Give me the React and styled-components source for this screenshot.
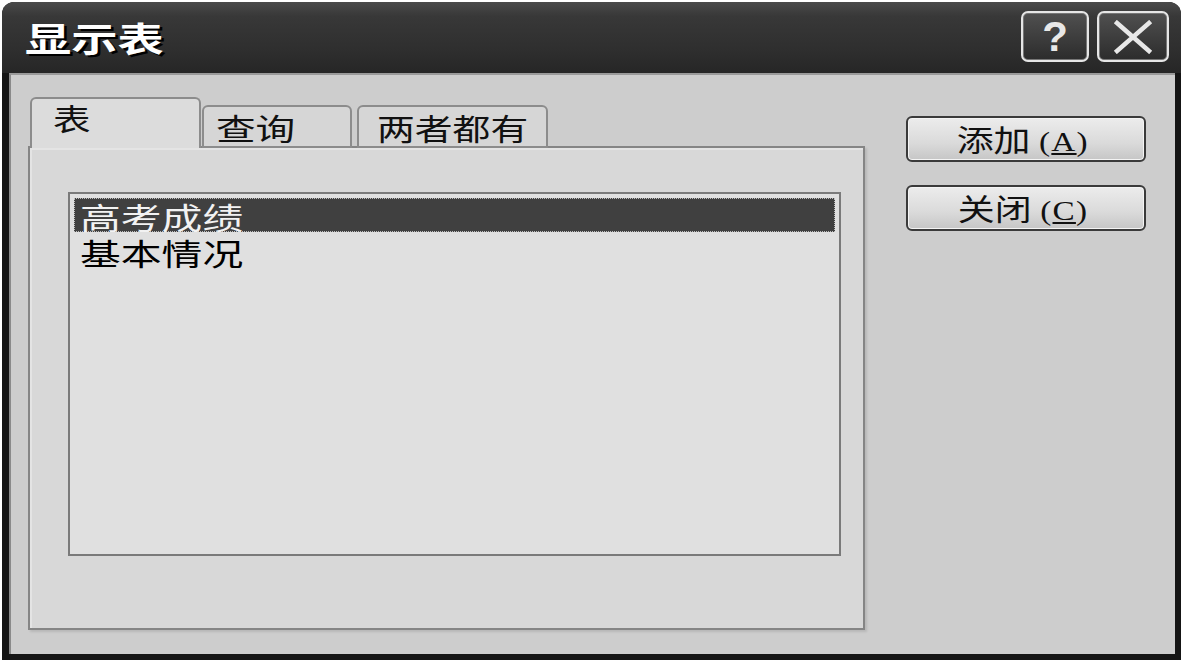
import React from "react";
import styled, { createGlobalStyle } from "styled-components";

const Global = createGlobalStyle`
  html, body { margin: 0; padding: 0; background: #ffffff; overflow: hidden; }
  body { font-family: "Noto Sans CJK SC", "Liberation Sans", sans-serif; }
`;

const Window = styled.div`
  margin: 2px 0 0 2px;
  width: 1179px;
  height: 658px;
  display: flex;
  flex-direction: column;
  background: #151515;
  border-radius: 12px 12px 0 0;
  overflow: hidden;
  box-sizing: border-box;
  padding: 0 6px 6px 7px;
`;

const TitleBar = styled.div`
  height: 71px;
  flex: none;
  display: flex;
  align-items: center;
  justify-content: space-between;
  padding: 0 12px 0 23px;
  margin: 0 -6px 0 -7px;
  background: linear-gradient(#4a4a4a 0%, #383838 20%, #2e2e2e 70%, #262626 100%);
`;

const Stretch = styled.span`
  display: inline-block;
  white-space: nowrap;
  transform: scaleX(${(p) => p.$sx});
  transform-origin: ${(p) => (p.$center ? "center" : "left")} center;
`;

const Title = styled.div`
  color: #ffffff;
  font-size: 34px;
  font-weight: 700;
  line-height: 1;
  text-shadow: 2px 2px 0 #000;
`;

const TitleButtons = styled.div`
  display: flex;
  gap: 8px;
  margin-top: -2px;
`;

const TitleButton = styled.div`
  width: ${(p) => p.$w}px;
  height: 51px;
  box-sizing: border-box;
  border: 2px solid #e6e6e6;
  border-radius: 7px;
  background: linear-gradient(#505050, #2c2c2c);
  display: flex;
  align-items: center;
  justify-content: center;
  color: #e8e8e8;
  font-family: "Liberation Sans", sans-serif;
  font-weight: 700;
  font-size: 42px;
  line-height: 1;
  box-shadow: inset 0 0 0 1px #777;
`;

const Body = styled.div`
  flex: 1;
  display: flex;
  gap: 41px;
  padding: 24px 26px 24px 17px;
  background: #cdcdcd;
  border-left: 2px solid #8a8a8a;
  border-top: 2px solid #9a9a9a;
`;

const TabArea = styled.div`
  width: 837px;
  display: flex;
  flex-direction: column;
`;

const TabStrip = styled.div`
  display: flex;
  align-items: flex-end;
  height: 49px;
  padding-left: 2px;
  position: relative;
  z-index: 1;
  margin-bottom: -2px;
`;

const Tab = styled.div`
  box-sizing: border-box;
  width: ${(p) => p.$w}px;
  height: ${(p) => (p.$active ? 51 : 43)}px;
  margin-right: ${(p) => p.$gap}px;
  padding-left: ${(p) => p.$pl}px;
  background: ${(p) => (p.$active ? "#dcdcdc" : "#d6d6d6")};
  border: 2px solid #8c8c8c;
  border-bottom: ${(p) => (p.$active ? "none" : "2px solid #8c8c8c")};
  border-radius: 6px 6px 0 0;
  font-size: 30px;
  line-height: ${(p) => (p.$active ? 36 : 40)}px;
  color: #111;
`;

const Panel = styled.div`
  flex: 1;
  box-sizing: border-box;
  background: #d8d8d8;
  border: 2px solid #858585;
  box-shadow: inset 2px 2px 0 #e4e4e4, 2px 2px 2px #b8b8b8;
  padding: 44px 22px 72px 38px;
  display: flex;
`;

const ListBox = styled.div`
  flex: 1;
  box-sizing: border-box;
  background: #e0e0e0;
  border: 2px solid #7a7a7a;
  padding: 4px 4px;
  display: flex;
  flex-direction: column;
  gap: 2px;
`;

const Row = styled.div`
  height: 34px;
  box-sizing: border-box;
  padding: 1px 0 0 5px;
  display: flex;
  align-items: center;
  font-size: 30px;
  line-height: 1;
  color: ${(p) => (p.$selected ? "#f2f2f2" : "#000")};
  background: ${(p) => (p.$selected ? "#404040" : "transparent")};
  border: 1px dotted ${(p) => (p.$selected ? "#bdbdbd" : "transparent")};
`;

const ButtonColumn = styled.div`
  display: flex;
  flex-direction: column;
  gap: 23px;
  padding-top: 17px;
`;

const Button = styled.div`
  width: 240px;
  height: 46px;
  box-sizing: border-box;
  border: 2px solid #3a3a3a;
  border-radius: 6px;
  background: linear-gradient(#ececec, #dadada 60%, #c6c6c6);
  box-shadow: inset 0 0 0 1px #f4f4f4;
  display: flex;
  align-items: center;
  justify-content: center;
  font-size: 30px;
  line-height: 1;
  color: #111;
  padding-right: 6px;
`;

const Mnemonic = styled.span`
  font-family: "Liberation Serif", serif;
  font-size: 27px;
  letter-spacing: 1px;
  margin-left: 7px;
  u { text-decoration-thickness: 2px; text-underline-offset: 2px; }
`;

export default function App() {
  return (
    <>
      <Global />
      <Window>
        <TitleBar>
          <Title>
            <Stretch $sx={1.36}>显示表</Stretch>
          </Title>
          <TitleButtons>
            <TitleButton $w={68}>?</TitleButton>
            <TitleButton $w={72}>
              <svg width="42" height="34" viewBox="0 0 42 34">
                <path d="M5 3 L37 31 M37 3 L5 31" stroke="#e8e8e8" strokeWidth="4.5" strokeLinecap="square" />
              </svg>
            </TitleButton>
          </TitleButtons>
        </TitleBar>
        <Body>
          <TabArea>
            <TabStrip>
              <Tab $active $w={171} $gap={1} $pl={21}>
                <Stretch $sx={1.25}>表</Stretch>
              </Tab>
              <Tab $w={150} $gap={5} $pl={12}>
                <Stretch $sx={1.32}>查询</Stretch>
              </Tab>
              <Tab $w={191} $gap={0} $pl={18}>
                <Stretch $sx={1.26}>两者都有</Stretch>
              </Tab>
            </TabStrip>
            <Panel>
              <ListBox>
                <Row $selected>
                  <Stretch $sx={1.36}>高考成绩</Stretch>
                </Row>
                <Row>
                  <Stretch $sx={1.36}>基本情况</Stretch>
                </Row>
              </ListBox>
            </Panel>
          </TabArea>
          <ButtonColumn>
            <Button>
              <Stretch $sx={1.23} $center>
                添加<Mnemonic>(<u>A</u>)</Mnemonic>
              </Stretch>
            </Button>
            <Button>
              <Stretch $sx={1.23} $center>
                关闭<Mnemonic>(<u>C</u>)</Mnemonic>
              </Stretch>
            </Button>
          </ButtonColumn>
        </Body>
      </Window>
    </>
  );
}
